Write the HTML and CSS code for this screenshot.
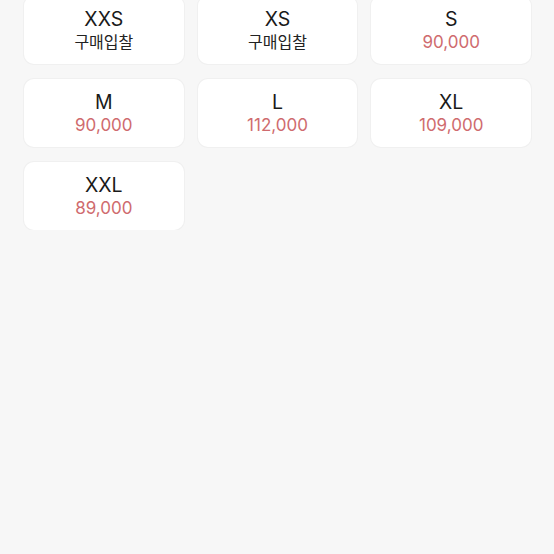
FILE: index.html
```html
<!DOCTYPE html>
<html lang="ko">
<head>
    <meta charset="UTF-8">
    <meta name="viewport" content="width=device-width, initial-scale=1.0">
    <title>사이즈 선택</title>
    <link rel="stylesheet" href="styles.css">
</head>
<body>

    <div class="size-grid">
        <div class="size-card">
            <div class="size-name">XXS</div>
            <div class="size-price bid">구매입찰</div>
        </div>
        <div class="size-card">
            <div class="size-name">XS</div>
            <div class="size-price bid">구매입찰</div>
        </div>
        <div class="size-card">
            <div class="size-name">S</div>
            <div class="size-price">90,000</div>
        </div>
        <div class="size-card">
            <div class="size-name">M</div>
            <div class="size-price">90,000</div>
        </div>
        <div class="size-card">
            <div class="size-name">L</div>
            <div class="size-price">112,000</div>
        </div>
        <div class="size-card">
            <div class="size-name">XL</div>
            <div class="size-price">109,000</div>
        </div>
        <div class="size-card">
            <div class="size-name">XXL</div>
            <div class="size-price">89,000</div>
        </div>
    </div>

</body>
</html>
```

FILE: styles.css
```css
body {
    margin: 0;
    background-color: #f7f7f7;
    font-family: Inter, "Liberation Sans", "Noto Sans CJK KR", sans-serif;
    color: #222;
}
.size-grid {
    display: grid;
    grid-template-columns: repeat(3, 1fr);
    gap: 15px 14px;
    padding: 0 23px 0 24px;
    margin-top: -4px;
}
.size-card {
    height: 68px;
    background: #fff;
    border-radius: 10px;
    box-shadow: 0 0 0 1px #f0f0f0;
    display: flex;
    flex-direction: column;
    align-items: center;
    justify-content: center;
}
.size-name {
    font-size: 19.5px;
    line-height: 24px;
    color: #1a1a1a;
}
.size-price {
    font-size: 17px;
    line-height: 22px;
    color: #cf6b6e;
}
.size-price.bid {
    font-size: 16px;
    color: #222;
}
```
